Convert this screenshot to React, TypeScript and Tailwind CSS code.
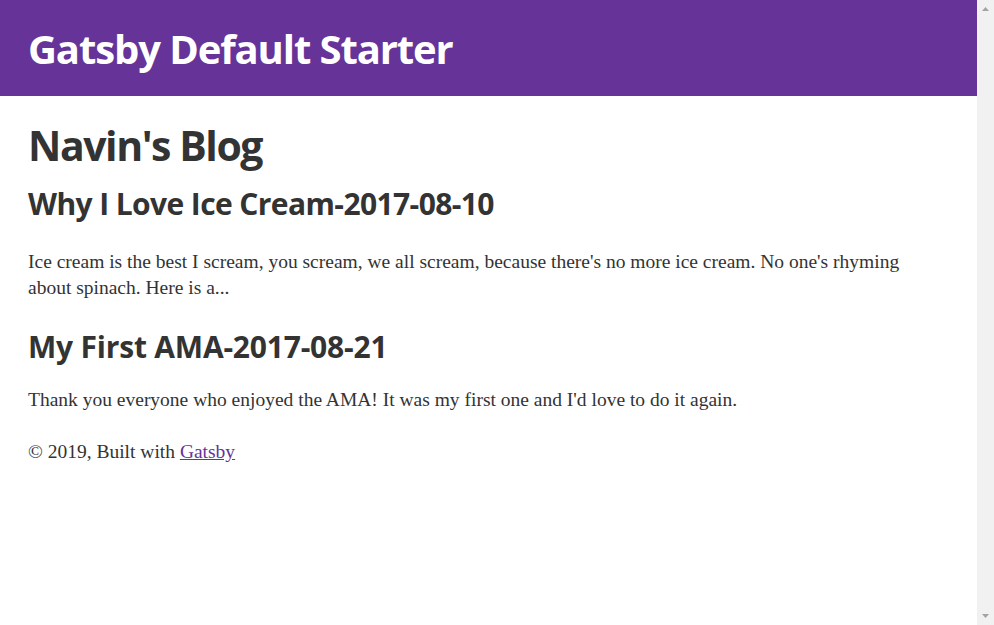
import React from "react";

export default function App() {
  return (
    <div className="flex h-[625px] w-[994px] overflow-hidden bg-white">
      <div className="flex-1 min-w-0">
        <header className="h-[96px] bg-[#663399] px-[28px] pt-[25px]">
          <h1 className="font-['Open_Sans','Noto_Sans',sans-serif] text-[40px] leading-[48px] tracking-[-1.1px] font-bold text-white m-0">
            Gatsby Default Starter
          </h1>
        </header>
        <main className="px-[28px] text-[#333333]">
          <h1 className="mt-[25px] font-['Open_Sans','Noto_Sans',sans-serif] text-[41px] leading-[48px] tracking-[-1.45px] font-bold">
            Navin's Blog
          </h1>
          <h3 className="mt-[17px] font-['Open_Sans','Noto_Sans',sans-serif] text-[30px] leading-[36px] tracking-[-0.6px] font-bold">
            Why I Love Ice Cream-2017-08-10
          </h3>
          <p className="mt-[27px] font-['Liberation_Serif','DejaVu_Serif',serif] text-[19.5px] leading-[26px] max-w-[885px]">
            Ice cream is the best I scream, you scream, we all scream, because there's no more ice cream. No one's rhyming about spinach. Here is a...
          </p>
          <h3 className="mt-[28px] font-['Open_Sans','Noto_Sans',sans-serif] text-[30px] leading-[36px] tracking-[-0.2px] font-bold">
            My First AMA-2017-08-21
          </h3>
          <p className="mt-[22px] font-['Liberation_Serif','DejaVu_Serif',serif] text-[19.5px] leading-[26px]">
            Thank you everyone who enjoyed the AMA! It was my first one and I'd love to do it again.
          </p>
          <footer className="mt-[26px] font-['Liberation_Serif','DejaVu_Serif',serif] text-[19.5px] leading-[26px]">
            © 2019, Built with{" "}
            <a href="#" className="text-[#663399] underline">
              Gatsby
            </a>
          </footer>
        </main>
      </div>
      <div className="w-[17px] h-full bg-[#f1f1f1] flex flex-col items-center justify-between py-[7px]">
        <svg width="7" height="4" viewBox="0 0 7 4">
          <polygon points="3.5,0 7,4 0,4" fill="#a3a3a3" />
        </svg>
        <svg width="7" height="4" viewBox="0 0 7 4">
          <polygon points="0,0 7,0 3.5,4" fill="#a3a3a3" />
        </svg>
      </div>
    </div>
  );
}
